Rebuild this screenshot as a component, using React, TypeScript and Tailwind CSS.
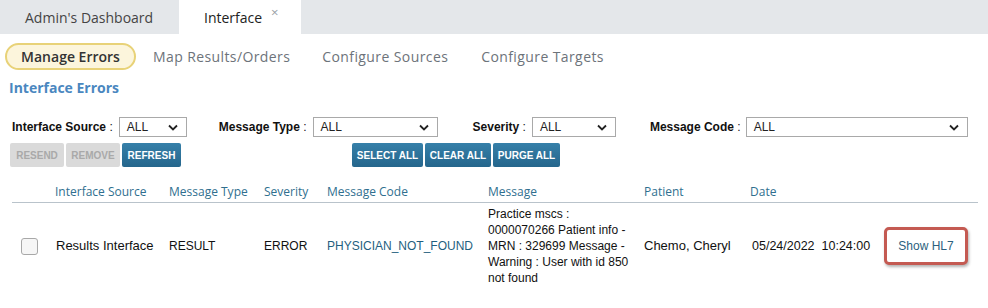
import React from "react";

const Chevron = () => (
  <svg width="10" height="7" viewBox="0 0 10 7" className="shrink-0">
    <path d="M1 1.5 L5 5.5 L9 1.5" fill="none" stroke="#222" strokeWidth="1.8" />
  </svg>
);

const Select = ({ width }: { width: string }) => (
  <div
    className={`${width} h-[20px] border border-[#a9a9a9] bg-white flex items-center justify-between pl-[7px] pr-[8px] text-[12px] text-[#222]`}
  >
    <span>ALL</span>
    <Chevron />
  </div>
);

const Label = ({ text, className }: { text: string; className: string }) => (
  <span className={className}>
    <span className="font-bold">{text}</span> :
  </span>
);

const ActionButton = ({
  label,
  disabled,
  width,
}: {
  label: string;
  disabled?: boolean;
  width: string;
}) => (
  <button
    className={`${width} h-[24px] rounded-[2px] text-[10px] font-bold flex items-center justify-center ${
      disabled
        ? "bg-[#dadada] text-[#a9a9a9]"
        : "bg-gradient-to-b from-[#3680a9] to-[#25668c] text-white"
    }`}
  >
    {label}
  </button>
);

export default function App() {
  return (
    <div className="w-[988px] h-[308px] bg-white overflow-hidden font-['Liberation_Sans',Arial,sans-serif]">
      {/* Top tabs */}
      <div className="h-[34px] bg-[#e4e7ea] flex items-stretch font-['Open_Sans',sans-serif] text-[14px]">
        <div className="w-[179px] pl-[25px] flex items-center text-[#444]">Admin's Dashboard</div>
        <div className="w-[122px] bg-white pl-[25px] flex items-center text-[#222] relative">
          Interface
          <span className="absolute left-[92px] top-[3px] text-[13px] text-[#9aa0a6]">×</span>
        </div>
      </div>

      {/* Sub nav */}
      <div className="flex items-center h-[28px] mt-[8px] pl-[5px] font-['Open_Sans',sans-serif] text-[14px] tracking-[0.4px]">
        <div className="w-[131px] h-[27px] rounded-full border-2 border-[#e8d278] bg-[#fcf5dc] flex items-center justify-center font-semibold text-[#333] tracking-normal">
          Manage Errors
        </div>
        <span className="ml-[17px] text-[#6d737a]">Map Results/Orders</span>
        <span className="ml-[32px] text-[#6d737a]">Configure Sources</span>
        <span className="ml-[33px] text-[#6d737a]">Configure Targets</span>
      </div>

      <div className="pl-[9px] mt-[7px] text-[14px] font-bold text-[#4a87bf] font-['Open_Sans',sans-serif]">
        Interface Errors
      </div>

      {/* Filters */}
      <div className="flex items-center mt-[19px] pl-[12px] text-[12px] text-[#111]">
        <Label text="Interface Source" className="mr-[6px]" />
        <Select width="w-[68px]" />
        <Label text="Message Type" className="ml-[32px] mr-[6px]" />
        <Select width="w-[125px]" />
        <Label text="Severity" className="ml-[35px] mr-[6px]" />
        <Select width="w-[84px]" />
        <Label text="Message Code" className="ml-[34px] mr-[5px]" />
        <Select width="w-[222px]" />
      </div>

      {/* Buttons */}
      <div className="flex items-center mt-[6px] pl-[10px] gap-[2px]">
        <ActionButton label="RESEND" disabled width="w-[54px]" />
        <ActionButton label="REMOVE" disabled width="w-[54px]" />
        <ActionButton label="REFRESH" width="w-[59px]" />
        <div className="w-[167px]" />
        <ActionButton label="SELECT ALL" width="w-[71px]" />
        <ActionButton label="CLEAR ALL" width="w-[66px]" />
        <ActionButton label="PURGE ALL" width="w-[67px]" />
      </div>

      {/* Table */}
      <div className="ml-[12px] mt-[14px] w-[966px]">
        <div className="grid grid-cols-[43px_114px_95px_63px_161px_156px_106px_134px_94px] h-[22px] items-center border-b border-[#b9c3cb] text-[12px] text-[#2f6f8f] font-['Open_Sans',sans-serif]">
          <div />
          <div>Interface Source</div>
          <div>Message Type</div>
          <div>Severity</div>
          <div>Message Code</div>
          <div>Message</div>
          <div>Patient</div>
          <div>Date</div>
          <div />
        </div>
        <div className="grid grid-cols-[43px_114px_95px_63px_161px_156px_106px_134px_94px] items-center text-[12px] text-[#111] py-[3px]">
          <div className="pl-[9px]">
            <div className="w-[17px] h-[17px] rounded-[3px] border border-[#a8a8a8] bg-[#f6f6f6]" />
          </div>
          <div className="pl-[1px] text-[13px]">Results Interface</div>
          <div>RESULT</div>
          <div>ERROR</div>
          <div className="text-[#1f5f80]">PHYSICIAN_NOT_FOUND</div>
          <div className="leading-[16px] pr-[4px]">
            Practice mscs :<br />
            0000070266 Patient info -<br />
            MRN : 329699 Message -<br />
            Warning : User with id 850<br />
            not found
          </div>
          <div className="text-[13px]">Chemo, Cheryl</div>
          <div className="pl-[2px] whitespace-pre text-[12.5px]">05/24/2022  10:24:00</div>
          <div className="flex">
            <button className="w-[84px] h-[38px] border-[3px] border-[#c45a52] rounded-[5px] shadow-[1px_2px_3px_rgba(0,0,0,0.3)] text-[12px] text-[#2b5f7e] bg-white flex items-center justify-center">
              Show HL7
            </button>
          </div>
        </div>
      </div>
    </div>
  );
}
